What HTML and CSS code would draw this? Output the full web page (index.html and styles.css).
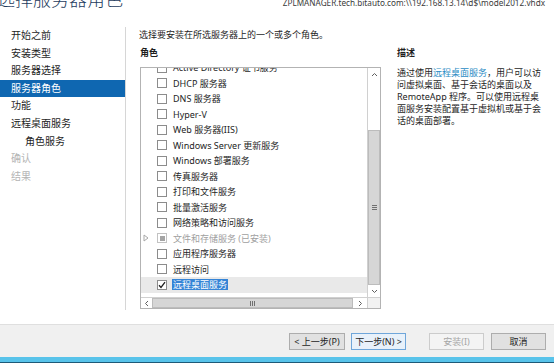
FILE: index.html
```html
<!DOCTYPE html>
<html lang="zh-CN">
<head>
    <meta charset="UTF-8">
    <meta name="viewport" content="width=device-width, initial-scale=1.0">
    <title>选择服务器角色</title>
    <link rel="stylesheet" href="styles.css">
</head>
<body>
    <div class="wizard">
        <header class="wizard-head">
            <h1 class="wizard-title">选择服务器角色</h1>
            <div class="target-server">ZPLMANAGER.tech.bitauto.com:\\192.168.13.14\d$\model2012.vhdx</div>
        </header>

        <div class="wizard-body">
            <nav class="steps">
                <div class="step">开始之前</div>
                <div class="step">安装类型</div>
                <div class="step">服务器选择</div>
                <div class="step active">服务器角色</div>
                <div class="step">功能</div>
                <div class="step">远程桌面服务</div>
                <div class="step sub">角色服务</div>
                <div class="step disabled">确认</div>
                <div class="step disabled">结果</div>
            </nav>

            <section class="page">
                <p class="intro">选择要安装在所选服务器上的一个或多个角色。</p>
                <div class="columns">
                    <div class="roles">
                        <h2 class="col-title">角色</h2>
                        <div class="rolebox">
                            <div class="role-view">
                                <ul class="role-list">
                                    <li><span class="expander"></span><span class="check"></span>Active Directory 证书服务</li>
                                    <li><span class="expander"></span><span class="check"></span>DHCP 服务器</li>
                                    <li><span class="expander"></span><span class="check"></span>DNS 服务器</li>
                                    <li><span class="expander"></span><span class="check"></span>Hyper-V</li>
                                    <li><span class="expander"></span><span class="check"></span>Web 服务器(IIS)</li>
                                    <li><span class="expander"></span><span class="check"></span>Windows Server 更新服务</li>
                                    <li><span class="expander"></span><span class="check"></span>Windows 部署服务</li>
                                    <li><span class="expander"></span><span class="check"></span>传真服务器</li>
                                    <li><span class="expander"></span><span class="check"></span>打印和文件服务</li>
                                    <li><span class="expander"></span><span class="check"></span>批量激活服务</li>
                                    <li><span class="expander"></span><span class="check"></span>网络策略和访问服务</li>
                                    <li class="installed">
                                        <span class="expander">
                                            <svg width="6" height="8" viewBox="0 0 6 8"><path d="M1 1 L5 4 L1 7 Z" fill="none" stroke="#a8a8a8" stroke-width="1"/></svg>
                                        </span>
                                        <span class="check"><span class="check-fill"></span></span>文件和存储服务 (已安装)
                                    </li>
                                    <li><span class="expander"></span><span class="check"></span>应用程序服务器</li>
                                    <li><span class="expander"></span><span class="check"></span>远程访问</li>
                                    <li class="current">
                                        <span class="expander"></span>
                                        <span class="check">
                                            <svg width="8" height="8" viewBox="0 0 8 8"><path d="M1 4.2 L3 6.4 L7 1.2" fill="none" stroke="#1e1e1e" stroke-width="1.3"/></svg>
                                        </span>
                                        <span class="picked">远程桌面服务</span>
                                    </li>
                                </ul>
                            </div>

                            <div class="vscroll">
                                <div class="sb-btn">
                                    <svg width="7" height="5" viewBox="0 0 7 5"><path d="M1 4 L3.5 1.5 L6 4" fill="none" stroke="#606060" stroke-width="1"/></svg>
                                </div>
                                <div class="v-track"></div>
                                <div class="v-thumb"><span class="grip-h"></span></div>
                                <div class="sb-btn">
                                    <svg width="7" height="5" viewBox="0 0 7 5"><path d="M1 1 L3.5 3.5 L6 1" fill="none" stroke="#606060" stroke-width="1"/></svg>
                                </div>
                            </div>

                            <div class="hscroll">
                                <div class="sb-btn left">
                                    <svg width="5" height="7" viewBox="0 0 5 7"><path d="M4 1 L1.5 3.5 L4 6" fill="none" stroke="#606060" stroke-width="1"/></svg>
                                </div>
                                <div class="h-thumb"><span class="grip-v"></span></div>
                                <div class="sb-btn right">
                                    <svg width="5" height="7" viewBox="0 0 5 7"><path d="M1 1 L3.5 3.5 L1 6" fill="none" stroke="#606060" stroke-width="1"/></svg>
                                </div>
                            </div>
                            <div class="corner"></div>
                        </div>
                    </div>

                    <div class="desc">
                        <h2 class="col-title">描述</h2>
                        <p class="desc-text">通过使用<a href="#">远程桌面服务</a>，用户可以访<br>问虚拟桌面、基于会话的桌面以及<br>RemoteApp 程序。可以使用远程桌<br>面服务安装配置基于虚拟机或基于会<br>话的桌面部署。</p>
                    </div>
                </div>
            </section>
        </div>

        <footer class="wizard-foot">
            <button type="button" class="btn btn-prev">&lt; 上一步(P)</button>
            <button type="button" class="btn btn-next">下一步(N) &gt;</button>
            <button type="button" class="btn btn-install" disabled>安装(I)</button>
            <button type="button" class="btn btn-cancel">取消</button>
        </footer>
        <div class="taskbar-edge"></div>
    </div>
</body>
</html>
```

FILE: styles.css
```css
* {
    box-sizing: border-box;
}

body {
    margin: 0;
    width: 554px;
    height: 363px;
    overflow: hidden;
    background: #fff;
    font-family: "Noto Sans", "Noto Sans CJK SC", sans-serif;
    font-size: 9px;
    color: #1e1e1e;
}

.wizard {
    display: flex;
    flex-direction: column;
    height: 363px;
}

/* header */
.wizard-head {
    height: 27px;
    flex-shrink: 0;
    display: flex;
    justify-content: space-between;
    align-items: flex-start;
}

.wizard-title {
    margin: -10px 0 0 -3px;
    font-size: 18px;
    line-height: 18px;
    font-weight: 300;
    color: #1e3c5e;
    white-space: nowrap;
}

.target-server {
    margin: -3px 9px 0 0;
    font-size: 8.2px;
    line-height: 11px;
    color: #3a3a3a;
    white-space: nowrap;
}

/* body */
.wizard-body {
    flex: 1;
    display: flex;
}

.steps {
    width: 126px;
    height: 283px;
    border-right: 1px solid #d6d6d6;
    font-size: 10px;
}

.step {
    height: 17.6px;
    line-height: 17.6px;
    padding-left: 11px;
    white-space: nowrap;
}

.step.active {
    background: #0f67b1;
    color: #fff;
}

.step.sub {
    padding-left: 25px;
}

.step.disabled {
    color: #b4b4b4;
}

.page {
    margin-left: 13px;
}

.intro {
    margin: 0;
    line-height: 16px;
    white-space: nowrap;
}

.columns {
    display: flex;
}

.roles {
    width: 241px;
    margin-left: 1px;
}

.col-title {
    margin: 0;
    height: 24px;
    line-height: 19px;
    font-size: 9px;
    font-weight: bold;
}

.desc {
    margin-left: 16px;
    width: 150px;
}

.desc-text {
    margin: 0;
    line-height: 12px;
    white-space: nowrap;
}

.desc-text a {
    color: #2b8cc4;
    text-decoration: none;
}

/* role list box */
.rolebox {
    height: 242px;
    border: 1px solid #b3b3b3;
    display: grid;
    grid-template-columns: 1fr 13px;
    grid-template-rows: 1fr 11px;
}

.role-view {
    overflow: hidden;
}

.role-list {
    list-style: none;
    margin: -8px 0 0;
    padding: 0;
}

.role-list li {
    height: 15.5px;
    display: flex;
    align-items: center;
    white-space: nowrap;
}

.expander {
    width: 16px;
    flex: none;
    display: flex;
    align-items: center;
    padding-left: 2px;
}

.check {
    width: 10px;
    height: 10px;
    flex: none;
    margin-right: 6px;
    border: 1px solid #8c8c8c;
    background: #fff;
    display: flex;
    align-items: center;
    justify-content: center;
}

.role-list li.installed {
    color: #a0a0a0;
}

.installed .check {
    border-color: #c2c2c2;
}

.check-fill {
    width: 5px;
    height: 5px;
    background: #a4a4a4;
}

.role-list li.current {
    background: #e9e9e9;
}

.picked {
    background: #3584d6;
    color: #fff;
    line-height: 11px;
    padding: 0 1px;
    margin-left: -1px;
}

/* scrollbars */
.vscroll {
    border-left: 1px solid #d0d0d0;
    display: flex;
    flex-direction: column;
}

.sb-btn {
    height: 12px;
    flex: none;
    display: flex;
    align-items: center;
    justify-content: center;
}

.v-track {
    height: 50px;
}

.v-thumb {
    flex: 1;
    background: #d6d6d6;
    border: 1px solid #bcbcbc;
    display: flex;
    align-items: center;
    justify-content: center;
}

.grip-h {
    width: 5px;
    height: 5px;
    border-top: 1px solid #707070;
    border-bottom: 1px solid #707070;
    background: linear-gradient(#707070, #707070) center / 100% 1px no-repeat;
}

.hscroll {
    border-top: 1px solid #d0d0d0;
    display: flex;
}

.hscroll .sb-btn {
    height: auto;
}

.hscroll .left {
    width: 11px;
}

.hscroll .right {
    width: 14px;
}

.h-thumb {
    flex: 1;
    background: #d6d6d6;
    border: 1px solid #bcbcbc;
    display: flex;
    align-items: center;
    justify-content: center;
}

.grip-v {
    width: 5px;
    height: 5px;
    border-left: 1px solid #707070;
    border-right: 1px solid #707070;
    background: linear-gradient(#707070, #707070) center / 1px 100% no-repeat;
}

.corner {
    border-top: 1px solid #d0d0d0;
    border-left: 1px solid #d0d0d0;
    background: #f2f2f2;
}

/* footer */
.wizard-foot {
    height: 33px;
    flex-shrink: 0;
    border-top: 1px solid #dfdfdf;
    background: #f0f0f0;
    display: flex;
    justify-content: flex-end;
    align-items: flex-start;
    padding: 8px 8px 0 0;
}

.btn {
    width: 55px;
    height: 17px;
    margin-left: 6px;
    padding: 0;
    border: 1px solid #adadad;
    background: #e1e1e1;
    font: inherit;
    line-height: 15px;
    color: #1e1e1e;
    white-space: nowrap;
}

.btn-prev {
    width: 56px;
}

.btn-next {
    border-color: #6fa6da;
    background: #e8f1fa;
}

.btn-install {
    margin-left: 23px;
    border-color: #cccccc;
    background: #f4f4f4;
    color: #a6a6a6;
}

.btn-cancel {
    margin-left: 7px;
}

.taskbar-edge {
    height: 6px;
    flex-shrink: 0;
    background: #58c3ea;
    border-bottom: 1px solid #1e5a78;
}
```
